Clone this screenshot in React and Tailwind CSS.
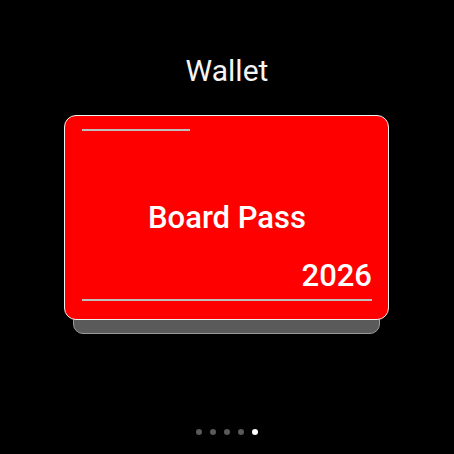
export default function App() {
  return (
    <div className="w-[454px] h-[454px] bg-black flex flex-col items-center overflow-hidden" style={{ fontFamily: "Roboto, 'Liberation Sans', sans-serif" }}>
      <div className="mt-[53px] h-[36px] leading-[36px] text-[30px] text-[#f5f5f5]">Wallet</div>
      <div className="relative mt-[26px] w-[326px] h-[219px]">
        <div className="absolute left-[9px] right-[10px] top-[20px] bottom-0 rounded-[10px] bg-[#5a5a5a] border border-[#9a9a9a]"></div>
        <div className="relative w-[325px] h-[205px] rounded-[12px] bg-[#ff0000] border border-[#f0f0f0] flex flex-col pl-[17px] pr-[16px]">
          <div className="mt-[13px] w-[108px] h-[2px] bg-[#bdbdbd]"></div>
          <div className="mt-[69px] text-center text-[31px] leading-[36px] font-medium text-white">Board Pass</div>
          <div className="mt-[22px] text-right text-[31px] leading-[36px] font-medium text-white">2026</div>
          <div className="mt-[5px] h-[2px] bg-[#bdbdbd]"></div>
        </div>
      </div>
      <div className="mt-[95px] flex gap-[8px]">
        <div className="w-[6px] h-[6px] rounded-full bg-[#5a5a5a]"></div>
        <div className="w-[6px] h-[6px] rounded-full bg-[#5a5a5a]"></div>
        <div className="w-[6px] h-[6px] rounded-full bg-[#5a5a5a]"></div>
        <div className="w-[6px] h-[6px] rounded-full bg-[#5a5a5a]"></div>
        <div className="w-[6px] h-[6px] rounded-full bg-white"></div>
      </div>
    </div>
  );
}
